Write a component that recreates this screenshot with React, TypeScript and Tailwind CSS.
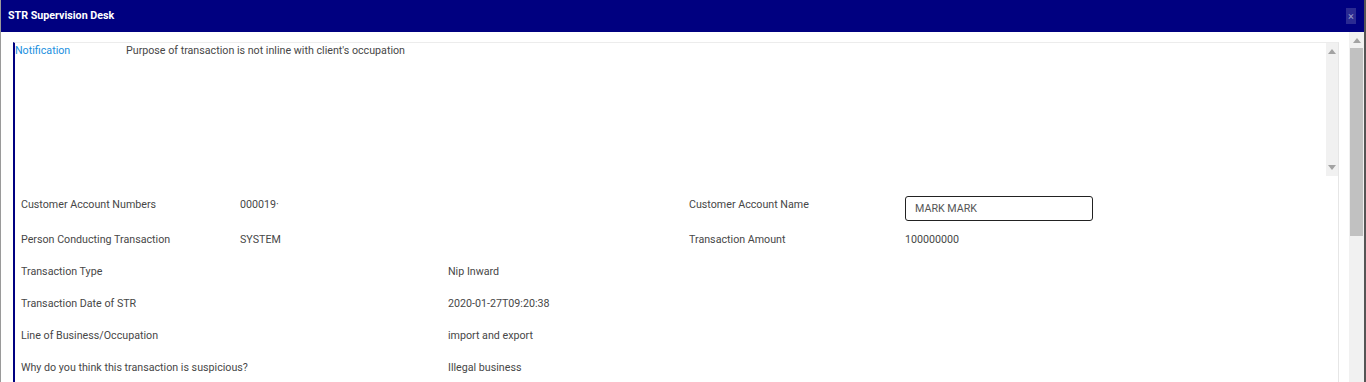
import React from 'react'

const font = { fontFamily: 'Roboto, "Liberation Sans", sans-serif' }

function Up({ className = '' }: { className?: string }) {
  return (
    <svg width="8" height="5" viewBox="0 0 8 5" className={className}>
      <path d="M0 5 L4 0 L8 5 Z" fill="#a3a3a3" />
    </svg>
  )
}

function Down({ className = '' }: { className?: string }) {
  return (
    <svg width="8" height="5" viewBox="0 0 8 5" className={className}>
      <path d="M0 0 L8 0 L4 5 Z" fill="#a3a3a3" />
    </svg>
  )
}

const rows = [
  ['Transaction Type', 'Nip Inward'],
  ['Transaction Date of STR', '2020-01-27T09:20:38'],
  ['Line of Business/Occupation', 'import and export'],
  ['Why do you think this transaction is suspicious?', 'Illegal business'],
]

export default function App() {
  return (
    <div
      style={font}
      className="flex h-[382px] w-[1366px] flex-col overflow-hidden border-l border-r-2 border-l-[#9a9a9a] border-r-[#555] bg-white text-[10.7px] text-[#474747]"
    >
      {/* Header */}
      <div className="flex h-8 shrink-0 items-center justify-between bg-[#000080] pl-[7px] pr-2">
        <span className="text-[10.7px] font-bold text-white">STR Supervision Desk</span>
        <span className="flex h-4 w-[10px] items-center justify-center bg-[#2a2a92] text-[11px] leading-none text-[#9a9ac8]">
          ×
        </span>
      </div>

      <div className="flex min-h-0 flex-1">
        {/* Main content */}
        <div className="flex-1 pl-3 pr-[10px] pt-[10px]">
          <div className="h-full border-l-2 border-r border-t border-l-[#000080] border-r-[#e6e6e6] border-t-[#ececec]">
            {/* Notification area */}
            <div className="flex h-[133px]">
              <div className="flex flex-1 items-start leading-4">
                <span className="w-[111px] text-[#1a8fe0]">Notification</span>
                <span>Purpose of transaction is not inline with client's occupation</span>
              </div>
              <div className="flex w-[12px] flex-col items-center justify-between bg-[#f1f1f1] pb-[6px] pt-[6px]">
                <Up />
                <Down />
              </div>
            </div>

            {/* Details */}
            <div className="pl-[6px] pt-[21px] leading-4">
              <div className="flex h-[35px] items-start">
                <span className="w-[219px]">Customer Account Numbers</span>
                <span className="w-[449px]">000019·</span>
                <span className="w-[216px]">Customer Account Name</span>
                <div className="-mt-px flex h-[25px] w-[188px] items-center rounded-[3px] border border-[#222] pl-[9px] text-[#555]">
                  MARK MARK
                </div>
              </div>
              <div className="flex h-8 items-start">
                <span className="w-[219px]">Person Conducting Transaction</span>
                <span className="w-[449px]">SYSTEM</span>
                <span className="w-[216px]">Transaction Amount</span>
                <span>100000000</span>
              </div>
              {rows.map(([label, value]) => (
                <div key={label} className="flex h-8 items-start">
                  <span className="w-[427px]">{label}</span>
                  <span>{value}</span>
                </div>
              ))}
            </div>
          </div>
        </div>

        {/* Page scrollbar */}
        <div className="flex w-[15px] shrink-0 flex-col items-center bg-[#f1f1f1] pt-[6px]">
          <Up />
          <div className="mt-[5px] h-[188px] w-[13px] bg-[#c1c1c1]" />
        </div>
      </div>
    </div>
  )
}
